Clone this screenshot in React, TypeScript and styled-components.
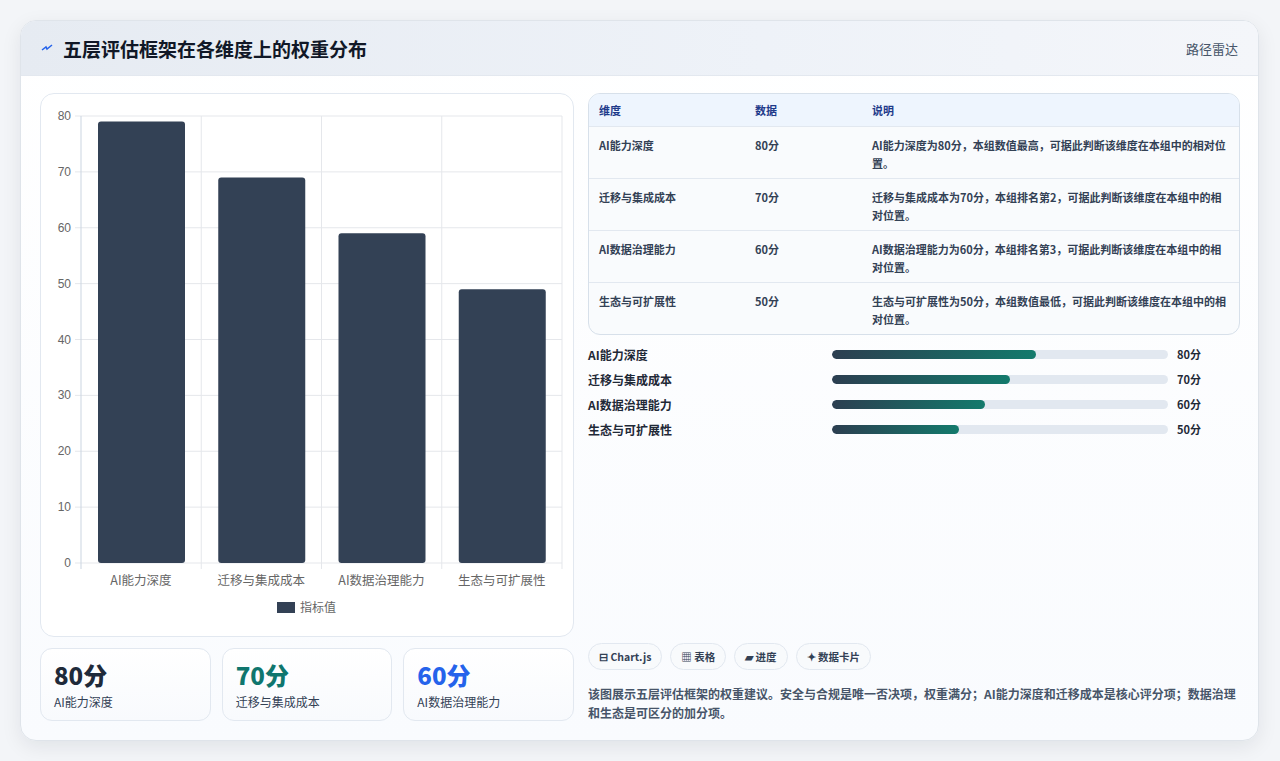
import React from 'react';
import styled, { createGlobalStyle } from 'styled-components';

const Global = createGlobalStyle`
  html, body { margin: 0; padding: 0; background: #f3f5f8; }
  body { font-family: "Noto Sans CJK SC", "Noto Sans", sans-serif; color: #1f2937; }
`;

const Page = styled.div`
  padding: 20px 21px 21px 20px;
`;

const Card = styled.div`
  height: 719px;
  border-radius: 16px;
  border: 1px solid #dfe4ea;
  background: linear-gradient(180deg, #ffffff 0%, #f9fbfe 100%);
  box-shadow: 0 6px 20px rgba(15, 23, 42, 0.08);
  overflow: hidden;
  display: flex;
  flex-direction: column;
`;

const Header = styled.div`
  height: 55px;
  box-sizing: border-box;
  padding: 0 20px 0 20px;
  display: flex;
  align-items: center;
  justify-content: space-between;
  background: linear-gradient(90deg, #e6ebf2 0%, #eef2f8 60%, #f4f6fa 100%);
  border-bottom: 1px solid #e3e8ef;
`;

const Title = styled.h1`
  margin: 0;
  font-size: 19px;
  font-weight: 700;
  color: #111827;
  display: flex;
  align-items: center;
  gap: 10px;
`;

const Tag = styled.span`
  font-size: 13px;
  color: #475569;
`;

const Body = styled.div`
  flex: 1;
  display: grid;
  grid-template-columns: 534px 1fr;
  gap: 14px;
  padding: 17px 18px 18px 19px;
`;

const Left = styled.div`
  display: flex;
  flex-direction: column;
  gap: 11px;
`;

const ChartBox = styled.div`
  height: 544px;
  box-sizing: border-box;
  border: 1px solid #e2e8f0;
  border-radius: 14px;
  background: #fff;
`;

const Stats = styled.div`
  display: grid;
  grid-template-columns: repeat(3, 1fr);
  gap: 11px;
`;

const Stat = styled.div`
  height: 73px;
  box-sizing: border-box;
  border: 1px solid #e2e8f0;
  border-radius: 12px;
  background: linear-gradient(180deg, #fff, #f8fafd);
  padding: 10px 13px;
`;

const StatValue = styled.div<{ $c: string }>`
  font-size: 24px;
  font-weight: 800;
  color: ${p => p.$c};
  line-height: 32px;
`;

const StatLabel = styled.div`
  font-size: 12px;
  color: #334155;
  margin-top: 2px;
`;

const Right = styled.div`
  display: flex;
  flex-direction: column;
`;

const Table = styled.div`
  border: 1px solid #d7e0ea;
  border-radius: 12px;
  overflow: hidden;
  background: #f9fbfd;
`;

const Row = styled.div<{ $head?: boolean }>`
  display: grid;
  grid-template-columns: 156px 117px 1fr;
  padding: 0 10px;
  font-size: 11px;
  line-height: 18px;
  font-weight: ${p => (p.$head ? 700 : 600)};
  color: ${p => (p.$head ? '#1e3a8a' : '#334155')};
  background: ${p => (p.$head ? '#eef5fe' : 'transparent')};
  border-top: ${p => (p.$head ? 'none' : '1px solid #e2e8f0')};
  min-height: ${p => (p.$head ? 32 : 52)}px;
  box-sizing: border-box;
  align-items: ${p => (p.$head ? 'center' : 'start')};
  padding-top: ${p => (p.$head ? 0 : 9)}px;
`;

const Bars = styled.div`
  display: flex;
  flex-direction: column;
  gap: 7px;
  margin-top: 10px;
`;

const BarRow = styled.div`
  display: grid;
  grid-template-columns: 244px 336px 1fr;
  gap: 0;
  align-items: center;
  font-size: 12px;
  font-weight: 600;
  color: #1f2937;
  height: 18px;
`;

const Track = styled.div`
  height: 9px;
  border-radius: 5px;
  background: #e2e8f0;
  overflow: hidden;
`;

const Fill = styled.div`
  height: 100%;
  border-radius: 5px;
  background: linear-gradient(90deg, #2c3e50, #137a6c);
`;

const BarValue = styled.span`
  padding-left: 9px;
  font-weight: 700;
  font-size: 11px;
`;

const Spacer = styled.div`
  flex: 1;
`;

const Chips = styled.div`
  display: flex;
  gap: 8px;
`;

const Chip = styled.span`
  height: 27px;
  box-sizing: border-box;
  padding: 0 10px;
  border: 1px solid #e2e8f0;
  border-radius: 14px;
  background: #f8fafc;
  display: flex;
  align-items: center;
  font-size: 10.5px;
  font-weight: 700;
  color: #334155;
`;

const Note = styled.p`
  margin: 14px 0 0;
  font-size: 12px;
  line-height: 19px;
  color: #475569;
  font-weight: 600;
`;

const data = [
  { name: 'AI能力深度', v: 80, desc: 'AI能力深度为80分，本组数值最高，可据此判断该维度在本组中的相对位置。' },
  { name: '迁移与集成成本', v: 70, desc: '迁移与集成成本为70分，本组排名第2，可据此判断该维度在本组中的相对位置。' },
  { name: 'AI数据治理能力', v: 60, desc: 'AI数据治理能力为60分，本组排名第3，可据此判断该维度在本组中的相对位置。' },
  { name: '生态与可扩展性', v: 50, desc: '生态与可扩展性为50分，本组数值最低，可据此判断该维度在本组中的相对位置。' },
];

const BarChart = () => {
  // coordinates relative to the chart card (card at 40,93)
  const x0 = 40, y0 = 22, h = 447, x1 = 521;
  const ticks = [0, 10, 20, 30, 40, 50, 60, 70, 80];
  const heights = [79, 69, 59, 49];
  const font = 'Liberation Sans, Arial, sans-serif';
  return (
    <svg width="532" height="542">
      {ticks.map(t => {
        const y = y0 + h - (t / 80) * h;
        return (
          <g key={t}>
            <line x1={x0 - 6} x2={x1} y1={y} y2={y} stroke="#e5e7eb" />
            <text x={x0 - 10} y={y + 4} textAnchor="end" fontSize="12" fill="#666" fontFamily={font}>{t}</text>
          </g>
        );
      })}
      {[0, 1, 2, 3, 4].map(i => (
        <line key={i} x1={x0 + i * 120.25} x2={x0 + i * 120.25} y1={y0} y2={y0 + h + 6} stroke={i === 0 ? '#cbd5e1' : '#e5e7eb'} />
      ))}
      {heights.map((v, i) => {
        const bh = (v / 80) * h;
        return (
          <rect key={i} x={x0 + 17 + i * 120.25} y={y0 + h - bh} width={87} height={bh} rx={3} fill="#334155" />
        );
      })}
      {data.map((d, i) => (
        <text key={d.name} x={x0 + 60 + i * 120.25} y={y0 + h + 22} textAnchor="middle" fontSize="12.5" fill="#666" fontFamily="Noto Sans CJK SC, sans-serif">{d.name}</text>
      ))}
      <rect x={236} y={508} width={18} height={11} fill="#334155" />
      <text x={259} y={518} fontSize="12" fill="#666" fontFamily="Noto Sans CJK SC, sans-serif">指标值</text>
    </svg>
  );
};

export default function App() {
  return (
    <Page>
      <Global />
      <Card>
        <Header>
          <Title>
            <svg width="12" height="10" viewBox="0 0 12 10">
              <path d="M1 7 L5 4 L6 6 L11 2" stroke="#2563eb" strokeWidth="1.5" fill="none" />
            </svg>
            五层评估框架在各维度上的权重分布
          </Title>
          <Tag>路径雷达</Tag>
        </Header>
        <Body>
          <Left>
            <ChartBox>
              <BarChart />
            </ChartBox>
            <Stats>
              <Stat><StatValue $c="#1f2a3a">80分</StatValue><StatLabel>AI能力深度</StatLabel></Stat>
              <Stat><StatValue $c="#0f766e">70分</StatValue><StatLabel>迁移与集成成本</StatLabel></Stat>
              <Stat><StatValue $c="#2563eb">60分</StatValue><StatLabel>AI数据治理能力</StatLabel></Stat>
            </Stats>
          </Left>
          <Right>
            <Table>
              <Row $head><span>维度</span><span>数据</span><span>说明</span></Row>
              {data.map(d => (
                <Row key={d.name}><span>{d.name}</span><span>{d.v}分</span><span>{d.desc}</span></Row>
              ))}
            </Table>
            <Bars>
              {data.map(d => (
                <BarRow key={d.name}>
                  <span>{d.name}</span>
                  <Track><Fill style={{ width: `${(d.v / 80) * 60.7}%` }} /></Track>
                  <BarValue>{d.v}分</BarValue>
                </BarRow>
              ))}
            </Bars>
            <Spacer />
            <Chips>
              <Chip>⊟ Chart.js</Chip>
              <Chip>▦ 表格</Chip>
              <Chip>▰ 进度</Chip>
              <Chip>✦ 数据卡片</Chip>
            </Chips>
            <Note>
              该图展示五层评估框架的权重建议。安全与合规是唯一否决项，权重满分；AI能力深度和迁移成本是核心评分项；数据治理和生态是可区分的加分项。
            </Note>
          </Right>
        </Body>
      </Card>
    </Page>
  );
}
